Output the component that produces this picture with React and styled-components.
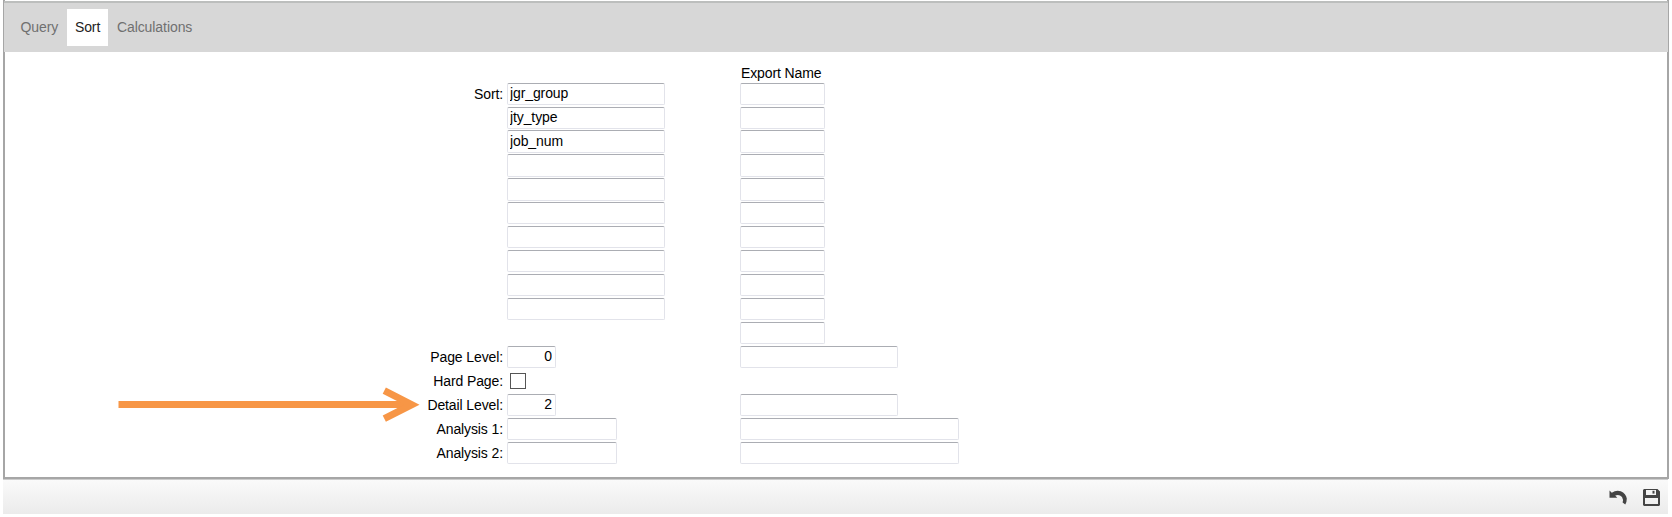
import React from "react";
import styled, { createGlobalStyle } from "styled-components";

const Global = createGlobalStyle`
  * { box-sizing: border-box; }
  html, body { margin: 0; background: #fff; overflow: hidden; }
  body {
    font-family: "Liberation Sans", Arial, sans-serif;
    font-size: 14px;
    letter-spacing: -0.11px;
    color: #000;
  }
`;

const Page = styled.div`
  height: 517px;
  padding: 0 3px;
  display: flex;
  flex-direction: column;
`;

const Panel = styled.main`
  position: relative;
  height: 479px;
  display: flex;
  flex-direction: column;
  padding-top: 1px;
  border: 2px solid #a6a6a6;
  border-top: 0;
`;

const TabBar = styled.nav`
  height: 51px;
  margin: 0 -1px;
  display: flex;
  align-items: flex-start;
  padding: 6px 0 0 8.5px;
  background: #d7d7d7;
  border-top: 2px solid #bcbebd;
`;

const Tab = styled.button`
  height: 37px;
  padding: 0 8px 2px;
  margin-right: 0.6px;
  border: 0;
  font: inherit;
  letter-spacing: -0.07px;
  color: ${(p) => (p.$active ? "#222" : "#707070")};
  background: ${(p) => (p.$active ? "#fff" : "transparent")};
`;

const Form = styled.form`
  display: flex;
  flex-direction: column;
  padding: 12px 0 0 399px;
`;

const Row = styled.div`
  height: ${(p) => p.$h || 24}px;
  display: grid;
  grid-template-columns: 99px 4px 233px 220px;
  align-items: start;
`;

const Label = styled.label`
  grid-column: 1;
  text-align: right;
  line-height: 22px;
  white-space: nowrap;
`;

const Heading = styled.div`
  grid-column: 4;
  padding-left: 1px;
  line-height: 18px;
`;

const Field = styled.input`
  grid-column: ${(p) => p.$col || 3};
  width: ${(p) => p.$w}px;
  height: ${(p) => p.$h || 22}px;
  margin: 0;
  padding: 0 3px 2px 2px;
  border: 1px solid #e2e3ea;
  border-top-color: #abadb3;
  border-radius: 2px;
  outline: 0;
  background: #fff;
  font: inherit;
  letter-spacing: inherit;
  text-align: ${(p) => (p.$right ? "right" : "left")};
`;

const Check = styled.input`
  grid-column: 3;
  appearance: none;
  width: 16px;
  height: 16px;
  margin: 3px;
  border: 1px solid #555;
  background: #fff;
`;

const Arrow = styled.svg`
  position: absolute;
  left: 113px;
  top: 386px;
  width: 304px;
  height: 37px;
`;

const Footer = styled.footer`
  height: 35px;
  margin-right: 1px;
  display: flex;
  justify-content: flex-end;
  align-items: center;
  gap: 15px;
  padding: 1px 8px 0 0;
  border-top: 1px solid #ccc;
  background: linear-gradient(#fafafa, #ebebeb);
`;

const IconButton = styled.button`
  display: flex;
  padding: 0;
  border: 0;
  background: none;
`;

const sortRows = [
  { value: "jgr_group", h: 24, fh: 22 },
  { value: "jty_type", h: 23, fh: 22 },
  { value: "job_num", h: 24, fh: 23 },
  { value: "", h: 24, fh: 23 },
  { value: "", h: 24, fh: 23 },
  { value: "", h: 24, fh: 22 },
  { value: "", h: 24, fh: 22 },
  { value: "", h: 24, fh: 22 },
  { value: "", h: 24, fh: 22 },
  { value: "", h: 24, fh: 22 },
];

const levels = [
  { label: "Page Level:", value: "0", w: 49, name: 158 },
  { label: "Hard Page:", check: true },
  { label: "Detail Level:", value: "2", w: 49, name: 158 },
  { label: "Analysis 1:", value: "", w: 110, name: 219 },
  { label: "Analysis 2:", value: "", w: 110, name: 219 },
];

export default function App() {
  return (
    <>
      <Global />
      <Page>
        <Panel>
          <TabBar>
            <Tab>Query</Tab>
            <Tab $active>Sort</Tab>
            <Tab>Calculations</Tab>
          </TabBar>
          <Form>
            <Row $h={19}><Heading>Export Name</Heading></Row>
            {sortRows.map(({ value, h, fh }, i) => (
              <Row key={i} $h={h}>
                {i === 0 && <Label>Sort:</Label>}
                <Field $w={158} $h={fh} defaultValue={value} />
                <Field $col={4} $w={85} $h={fh} />
              </Row>
            ))}
            <Row><Field $col={4} $w={85} /></Row>
            {levels.map((l) => (
              <Row key={l.label}>
                <Label>{l.label}</Label>
                {l.check ? <Check type="checkbox" /> : <Field $w={l.w} $right defaultValue={l.value} />}
                {l.name && <Field $col={4} $w={l.name} />}
              </Row>
            ))}
          </Form>
          <Arrow viewBox="0 0 304 37" fill="none" stroke="#f79646" strokeWidth="7">
            <path d="M0.5 18.5H294" />
            <path d="M266.3 4.7L293.8 18.7L266.3 32.7" />
          </Arrow>
        </Panel>
        <Footer>
          <IconButton aria-label="Undo">
            <svg width="19" height="17" viewBox="0 0 19 17">
              <path d="M0.5 1.5L2.8 3.8Q7 0.6 11.8 2.2Q17 4.5 17.8 9.5Q17.8 13 16.3 15.5L13.6 13.6Q14.6 10.5 13 8Q10 4.7 6.2 6.6L8.3 8.8H0.5Z" fill="#444" />
            </svg>
          </IconButton>
          <IconButton aria-label="Save">
            <svg width="17" height="17" viewBox="0 0 17 17">
              <path fillRule="evenodd" d="M1 0H14.5L17 2.5V16L16 17H1L0 16V1ZM3 1V6H13V1ZM2 9V15H15V9Z" fill="#444" />
              <path d="M9.5 1.8h2v2.8h-2z" fill="#444" />
            </svg>
          </IconButton>
        </Footer>
      </Page>
    </>
  );
}
